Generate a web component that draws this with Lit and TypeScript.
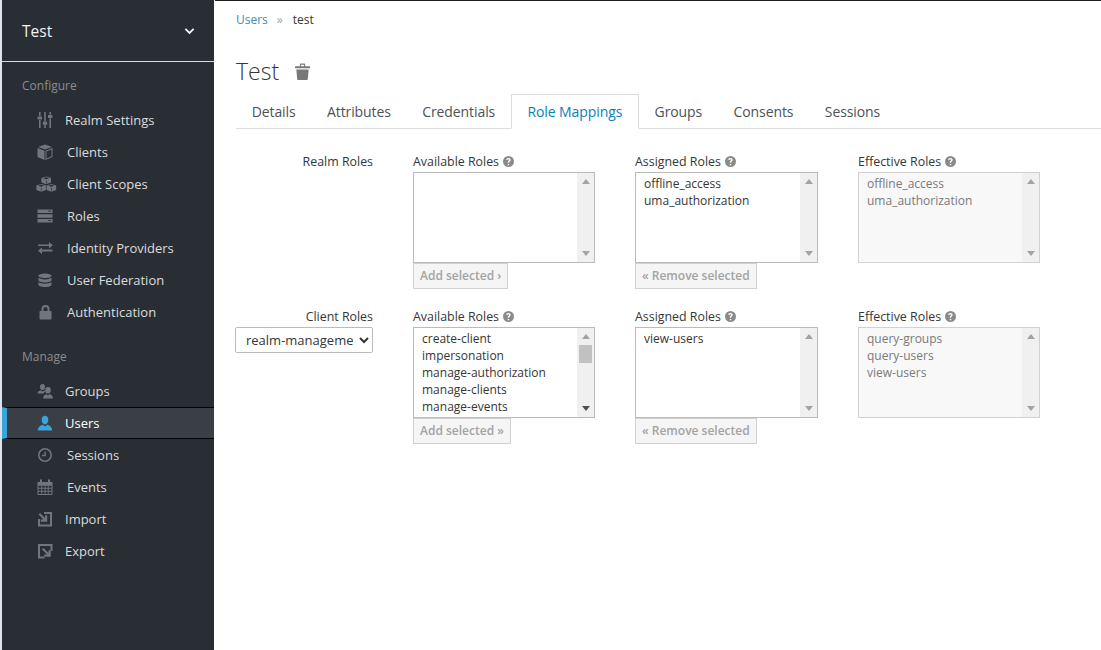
import { LitElement, html, css, svg } from "lit";
import { customElement } from "lit/decorators.js";

const line = (d: string, w = 2) => svg`<path d=${d} fill="none" stroke="#72767b" stroke-width=${w}/>`;

const icons: Record<string, any> = {
  sliders: svg`<path d="M2 0h1.600v4H2zM2 8h1.600v8H2zM.6 4.500h4.400v3H.6zM7.200 0h1.600v9.500H7.200zM7.200 13h1.600v3H7.200zM5.800 9.800h4.400v3H5.800zM12.400 0H14v2.500h-1.600zM12.400 6.500H14V16h-1.600zM11 3h4.400v3H11z"/>`,
  cube: svg`<path d="M8 .5l7 2.500L8 5.600 1 3zM.5 4l7 2.700V16L.5 13z"/><path d="M8.500 6.700l7-2.700v9l-7 3zm1 .7v7.100l5-2.200V5.500z"/>`,
  cubes: svg`<g transform="translate(-1 0) scale(1.200 1.050)"><path d="M8.500.5l4 1.500v4.300l-4 1.600-4-1.600V2zM4.300 7.600l4 1.500v4.300l-4 1.700-4-1.700V9.100zM12.800 7.600l4 1.500v4.300l-4 1.700-4-1.700V9.100z"/><path fill="#292e34" d="M8.500 3.200L6 2.200l2.500-1 2.500 1zM4.300 10.300l-2.500-1 2.500-1 2.500 1zM12.800 10.300l-2.500-1 2.500-1 2.500 1zM8.600 4.200h.5v2.900h-.5zM4.100 11.300h.5v3.300h-.5zM12.600 11.300h.5v3.300h-.5z"/></g>`,
  roles: svg`<path fill-rule="evenodd" d="M.5 1.500h15v3.500H.5zM11 2.800v.8h3v-.8zM.5 6.300h15v3.400H.5zM.5 11h15v3.500H.5zM11 12.300v.8h3v-.8z"/>`,
  exchange: svg`<path d="M1 5.500h11V3l3.800 3.300L12 9.500V7H1zM15.500 10.500H5V8.500l-4 3.200L5 15v-2.500h10.500z" transform="translate(0 -1)"/>`,
  database: svg`<path d="M8 .5c3.600 0 6.500 1 6.500 2.300S11.600 5.100 8 5.100 1.500 4.100 1.500 2.800 4.400.5 8 .5zM1.500 4.600c1 1 3.500 1.800 6.500 1.800s5.500-.8 6.500-1.800v2.600C14.500 8.400 11.600 9.400 8 9.400S1.500 8.400 1.500 7.200zM1.500 9c1 1 3.500 1.700 6.500 1.700s5.500-.7 6.500-1.700v2.700c0 1.300-2.900 2.300-6.500 2.300s-6.500-1-6.500-2.300z" transform="translate(0 1)"/>`,
  lock: svg`<path fill-rule="evenodd" d="M4 7V5a4 4 0 018 0v2h1.200c.5 0 .8.300.8.800v6.900c0 .5-.3.800-.8.800H2.800c-.5 0-.8-.3-.8-.8V7.800c0-.5.300-.8.800-.8zm2 0h4V5a2 2 0 00-4 0z" transform="translate(.5 0)"/>`,
  group: svg`<path d="M5.500 1a2.500 3 0 110 6 2.500 3 0 010-6zM.5 10.500c.2-1.800 1.600-2.800 3.300-3.200l1.700 1.300 1.500-1.200c.6.200 1.100.4 1.500.8-.9.700-1.500 1.500-1.800 2.300z"/><path d="M11 4a2.800 3.200 0 110 6.400A2.800 3.200 0 0111 4zM6 15.500c.1-2.300 1.500-3.800 3.300-4.500l1.700 1.400 1.700-1.400c1.800.7 3.200 2.200 3.300 4.500z"/>`,
  user: svg`<path d="M8 .8c2.100 0 3.300 1.700 3.300 3.900S10 9.400 8 9.400 4.700 6.900 4.700 4.700 5.900.8 8 .8zM.8 15.500c0-3.400 2.400-5 5-5.800L8 11.400l2.200-1.700c2.600.8 5 2.400 5 5.800z"/>`,
  clock: svg`<path fill-rule="evenodd" d="M8 1a7 7 0 110 14A7 7 0 018 1zm0 1.600a5.400 5.400 0 100 10.800A5.400 5.400 0 008 2.600zM8.800 4.500v4.700H5V7.800h2.400V4.500z"/>`,
  calendar: svg`<path fill-rule="evenodd" d="M.5 3H3V1.300a1 1 0 012 0V3h6V1.300a1 1 0 012 0V3h2.500v13H.5zm1 3.800v2h2.800v-2zm3.700 0v2h2.400v-2zm3.300 0v2h2.300v-2zm3.200 0v2h2.800v-2zm-10.200 3v2h2.800v-2zm3.700 0v2h2.400v-2zm3.300 0v2h2.300v-2zm3.200 0v2h2.800v-2zm-10.200 3V15h2.800v-2.200zm3.700 0V15h2.400v-2.200zm3.300 0V15h2.300v-2.200zm3.200 0V15h2.800v-2.200z"/>`,
  import: svg`${line("M7 2h7v12.500H2V8")}<path d="M1.500 3.500L3 2l5 5V4.200h2.200v6.500H3.700V8.500h2.800z"/>`,
  export: svg`${line("M7.500 14.500H2V2h12.500v6")}<path d="M5 6.500L6.500 5l5 5V7.300h2.200v6.500H7.200v-2.200H10z"/>`,
  chev: svg`<path d="M2 5.500l6 6 6-6" fill="none" stroke="currentColor" stroke-width="2.600"/>`,
};

const nav1 = [
  ["Realm Settings", "sliders", "n"],
  ["Clients", "cube", "w"],
  ["Client Scopes", "cubes", "w"],
  ["Roles", "roles", "w"],
  ["Identity Providers", "exchange", "w"],
  ["User Federation", "database", "w"],
  ["Authentication", "lock", "w"],
];
const nav2 = [
  ["Groups", "group", "n"],
  ["Users", "user", "n", "active"],
  ["Sessions", "clock", "w"],
  ["Events", "calendar", "w"],
  ["Import", "import", "n"],
  ["Export", "export", "n"],
];

@customElement("app-root")
export class AppRoot extends LitElement {
  static styles = css`
    :host { display: flex; height: 650px; width: 1101px; overflow: hidden; font-family: "Open Sans", sans-serif; font-size: 13px; color: #363636; background: #fff; }
    .strip { width: 2px; background: #dde3ea; flex: none; }
    .side { width: 212px; flex: none; background: #292e34; color: #dbdcdd; display: flex; flex-direction: column; }
    .realm { box-sizing: border-box; border-bottom: 1px solid #d9dadb; height: 62px; padding: 0 19px 0 20px; display: flex; align-items: center; justify-content: space-between; font-size: 15.5px; color: #f3f3f3; }
    .realm svg { width: 11px; height: 11px; color: #f5f5f5; }
    .sec { color: #8b8d8f; font-size: 12px; height: 16px; line-height: 16px; padding-left: 20px; }
    .sec.first { margin-top: 16px; margin-bottom: 10px; }
    .sec.second { margin-top: 21px; margin-bottom: 10px; }
    .item { height: 32px; display: flex; align-items: center; padding-left: 35px; box-sizing: border-box; color: #dbdcdd; }
    .item svg { width: 16px; height: 16px; fill: #72767b; flex: none; margin-right: 12px; overflow: visible; }
    .item.w svg { margin-right: 14px; }
    .item.active { background: #393f44; border-left: 5px solid #39a5dc; padding-left: 30px; border-top: 1px solid #030303; border-bottom: 1px solid #030303; color: #fff; }
    .item.active svg { fill: #39a5dc; }
    .main { flex: 1; min-width: 0; margin-left: 1px; border-top: 1px solid #1f1f1f; padding-left: 21px; }
    .crumb { height: 37px; display: flex; align-items: center; gap: 9px; font-size: 12px; color: #363636; }
    .crumb a { color: #3b8db8; text-decoration: none; }
    .crumb .sep { color: #a0a0a0; font-size: 12px; margin-right: 1px; }
    h1 { margin: 14px 0 0; height: 38px; display: flex; align-items: center; gap: 15px; font-size: 23px; font-weight: 300; color: #363636; line-height: 38px; }
    h1 svg { width: 17px; height: 17px; fill: #77787a; }
    .tabs { display: flex; margin: 4px 0 0; border-bottom: 1px solid #ddd; height: 35px; box-sizing: border-box; font-size: 14px; letter-spacing: -0.09px; color: #4d5258; }
    .tab { padding: 0 15.7px; line-height: 36px; height: 35px; box-sizing: border-box; white-space: nowrap; }
    .tab.on { color: #0a7fb5; background: #fff; padding: 0 15.6px; border: 1px solid #ddd; border-bottom: 1px solid #fff; line-height: 34px; height: 35px; }
    .form { display: grid; grid-template-columns: 137px 222px 223px 222px; padding-top: 23px; }
    .lab { text-align: right; line-height: 18px; height: 18px; font-size: 12.4px; color: #363636; }
    .left { display: flex; flex-direction: column; align-items: flex-end; gap: 1px; padding-top: 1px; }
    .col { margin-left: 40px; width: 182px; }
    .col.wide .box { width: 183px; }
    .head { display: flex; align-items: center; gap: 4px; height: 18px; font-size: 12.4px; color: #363636; margin-bottom: 2px; white-space: nowrap; }
    .head svg { width: 11px; height: 11px; fill: #8a8a8a; }
    .box { display: flex; width: 182px; height: 91px; box-sizing: border-box; border: 1px solid #bbb; background: #fff; font-size: 12px; line-height: 17px; color: #363636; }
    .box.ro { border-color: #d1d1d1; background: #f8f8f8; color: #7a7a7a; }
    .list { flex: 1; padding: 2px 0 0 8px; white-space: nowrap; overflow: hidden; }
    .bar { width: 17px; background: #f0f0f0; flex: none; display: flex; flex-direction: column; align-items: center; justify-content: space-between; padding: 6px 0; box-sizing: border-box; position: relative; }
    .up { width: 0; height: 0; border: 4px solid transparent; border-top: 0; border-bottom: 5px solid #a3a3a3; }
    .dn { width: 0; height: 0; border: 4px solid transparent; border-bottom: 0; border-top: 5px solid #a3a3a3; }
    .bar.dark .dn { border-top-color: #505050; }
    .thumb { position: absolute; left: 2px; top: 17px; width: 13px; height: 18px; background: #c1c1c1; }
    .btn { display: inline-flex; align-items: center; height: 26px; box-sizing: border-box; border: 1px solid #d1d1d1; background: #f5f5f5; color: #a3a3a3; font-size: 12px; font-weight: 600; padding: 0 6px 2px; white-space: nowrap; }
    .r2 { margin-top: 18px; }
    select { width: 138px; height: 26px; box-sizing: border-box; font-family: inherit; font-size: 13px; color: #363636; background: #fff; border: 1px solid #bbb; border-radius: 2px; padding: 0 3px 0 6px; margin-top: 0; }
  `;

  private hint() {
    return html`<svg viewBox="0 0 16 16"><path fill-rule="evenodd" d="M8 0a8 8 0 110 16A8 8 0 018 0zM6.900 11.500v2h2.200v-2zM8 2.800c-1.900 0-3.200 1-3.400 2.800l2 .3c.1-.9.600-1.300 1.300-1.300s1.100.4 1.100 1c0 .5-.3.800-.9 1.300-.9.700-1.200 1.300-1.200 2.200v.6h2v-.4c0-.6.200-.8.900-1.400.9-.7 1.300-1.300 1.300-2.400 0-1.600-1.300-2.700-3.100-2.700z"/></svg>`;
  }

  private col(title: string, rows: string[], opts: { ro?: boolean; btn?: string; thumb?: boolean; wide?: boolean } = {}) {
    return html`<div class="col ${opts.wide ? "wide" : ""}">
      <div class="head">${title} ${this.hint()}</div>
      <div class="box ${opts.ro ? "ro" : ""}">
        <div class="list">${rows.map((r) => html`<div>${r}</div>`)}</div>
        <div class="bar ${opts.thumb ? "dark" : ""}">
          <span class="up"></span>
          ${opts.thumb ? html`<span class="thumb"></span>` : ""}
          <span class="dn"></span>
        </div>
      </div>
      ${opts.btn ? html`<div class="btn">${opts.btn}</div>` : ""}
    </div>`;
  }

  private navItem(i: string[]) {
    return html`<div class="item ${i[2]} ${i[3] ?? ""}"><svg viewBox="0 0 16 16">${icons[i[1]]}</svg><span>${i[0]}</span></div>`;
  }

  render() {
    return html`
      <div class="strip"></div>
      <aside class="side">
        <div class="realm"><span>Test</span><svg viewBox="0 0 16 16">${icons.chev}</svg></div>
        <div class="sec first">Configure</div>
        ${nav1.map((i) => this.navItem(i))}
        <div class="sec second">Manage</div>
        ${nav2.map((i) => this.navItem(i))}
      </aside>
      <main class="main">
        <div class="crumb"><a>Users</a><span class="sep">»</span><span>test</span></div>
        <h1>Test <svg viewBox="0 0 16 16"><path d="M5.500 1.500c0-.6.400-1 1-1h3c.6 0 1 .4 1 1V3H15v2H1V3h4.500zm1 .2V3h3V1.700zM2.200 6h11.600l-.8 9c0 .6-.5 1-1 1H4c-.5 0-1-.4-1-1z"/></svg></h1>
        <div class="tabs">
          <div class="tab">Details</div><div class="tab">Attributes</div><div class="tab">Credentials</div>
          <div class="tab on">Role Mappings</div>
          <div class="tab">Groups</div><div class="tab">Consents</div><div class="tab">Sessions</div>
        </div>
        <div class="form">
          <div class="left"><div class="lab">Realm Roles</div></div>
          ${this.col("Available Roles", [], { btn: "Add selected ›" })}
          ${this.col("Assigned Roles", ["offline_access", "uma_authorization"], { btn: "« Remove selected", wide: true })}
          ${this.col("Effective Roles", ["offline_access", "uma_authorization"], { ro: true })}
          <div class="left r2"><div class="lab">Client Roles</div>
            <select><option>realm-management</option></select></div>
          <div class="r2">${this.col("Available Roles", ["create-client", "impersonation", "manage-authorization", "manage-clients", "manage-events"], { btn: "Add selected »", thumb: true })}</div>
          <div class="r2">${this.col("Assigned Roles", ["view-users"], { btn: "« Remove selected", wide: true })}</div>
          <div class="r2">${this.col("Effective Roles", ["query-groups", "query-users", "view-users"], { ro: true })}</div>
        </div>
      </main>`;
  }
}
